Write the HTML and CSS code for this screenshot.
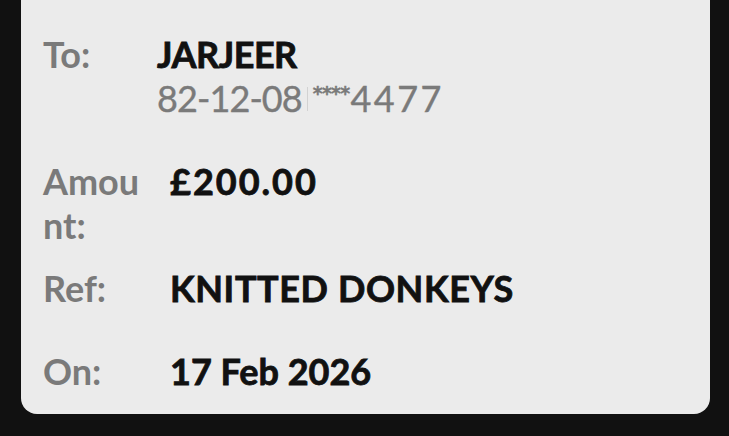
FILE: index.html
```html
<!DOCTYPE html>
<html lang="en">
<head>
<meta charset="utf-8">
<title>Payment details</title>
<link rel="stylesheet" href="styles.css">
</head>
<body>
<div class="card">
  <div class="row row-to">
    <div class="label">To:</div>
    <div class="value">
      <div class="name">JARJEER</div>
      <div class="account"><span class="sort">82-12-08</span><span class="sep"></span><span class="stars">****</span><span class="acc">4477</span></div>
    </div>
  </div>
  <div class="row row-amount">
    <div class="label">Amount:</div>
    <div class="value amount">£200.00</div>
  </div>
  <div class="row row-ref">
    <div class="label">Ref:</div>
    <div class="value reference">KNITTED DONKEYS</div>
  </div>
  <div class="row row-on">
    <div class="label">On:</div>
    <div class="value">17 Feb 2026</div>
  </div>
</div>
</body>
</html>
```

FILE: styles.css
```css
html, body {
  margin: 0;
  padding: 0;
  background: #111111;
}
body {
  width: 729px;
  height: 436px;
  overflow: hidden;
  font-family: "Lato", "Liberation Sans", sans-serif;
}
.card {
  margin: 0 19px 0 21px;
  background: #ebebeb;
  border-radius: 0 0 16px 16px;
  padding: 32px 22px 21px 22px;
}
.row {
  display: flex;
  align-items: flex-start;
  font-size: 36px;
  line-height: 44px;
}
.label {
  width: 105px;
  flex: none;
  color: #7a7a7a;
  font-weight: 700;
  word-break: break-all;
}
.value {
  color: #111111;
  font-weight: 700;
  -webkit-text-stroke: 0.8px #111111;
  margin-left: 22px;
}
.row-to .value {
  margin-left: 9px;
}
.name {
  letter-spacing: -0.5px;
}
.amount {
  letter-spacing: 2px;
}
.reference {
  letter-spacing: 0.6px;
}
.account {
  color: #7a7a7a;
  font-weight: 400;
  -webkit-text-stroke: 0.4px #7a7a7a;
  display: flex;
  align-items: center;
}
.sort {
  letter-spacing: -0.9px;
}
.acc {
  letter-spacing: 2.5px;
}
.sep {
  display: inline-block;
  width: 1px;
  height: 24px;
  background: #d2d2d2;
  margin: 2px 5px 0 5px;
}
.stars {
  font-family: "DejaVu Sans", sans-serif;
  font-size: 19px;
  line-height: 20px;
  font-weight: 700;
  align-self: flex-start;
  margin-top: 7px;
  margin-right: 1px;
  letter-spacing: -0.8px;
  -webkit-text-stroke: 0.4px #7a7a7a;
}
.row-amount {
  margin-top: 39px;
}
.row-ref {
  margin-top: 19px;
}
.row-on {
  margin-top: 39px;
}
```
